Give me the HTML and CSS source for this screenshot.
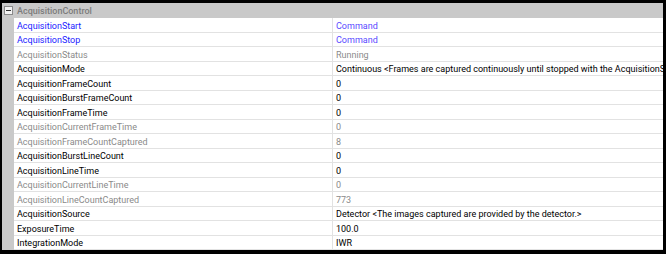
FILE: index.html
```html
<!DOCTYPE html>
<html lang="en">
<head>
  <meta charset="UTF-8" />
  <title>AcquisitionControl</title>
  <link rel="stylesheet" href="styles.css">
</head>
<body>
  <div class="frame">
    <div class="grid">
      <div class="cat">
        <span class="toggle"><span class="minus"></span></span>
        <span class="cat-name">AcquisitionControl</span>
      </div>
      <div class="body">
        <div class="strip"></div>
        <div class="rows">
          <div class="row cmd"><div class="name">AcquisitionStart</div><div class="value">Command</div></div>
          <div class="row cmd"><div class="name">AcquisitionStop</div><div class="value">Command</div></div>
          <div class="row ro"><div class="name">AcquisitionStatus</div><div class="value">Running</div></div>
          <div class="row"><div class="name">AcquisitionMode</div><div class="value">Continuous &lt;Frames are captured continuously until stopped with the AcquisitionStop command.&gt;</div></div>
          <div class="row"><div class="name">AcquisitionFrameCount</div><div class="value">0</div></div>
          <div class="row"><div class="name">AcquisitionBurstFrameCount</div><div class="value">0</div></div>
          <div class="row"><div class="name">AcquisitionFrameTime</div><div class="value">0</div></div>
          <div class="row ro"><div class="name">AcquisitionCurrentFrameTime</div><div class="value">0</div></div>
          <div class="row ro"><div class="name">AcquisitionFrameCountCaptured</div><div class="value">8</div></div>
          <div class="row"><div class="name">AcquisitionBurstLineCount</div><div class="value">0</div></div>
          <div class="row"><div class="name">AcquisitionLineTime</div><div class="value">0</div></div>
          <div class="row ro"><div class="name">AcquisitionCurrentLineTime</div><div class="value">0</div></div>
          <div class="row ro"><div class="name">AcquisitionLineCountCaptured</div><div class="value">773</div></div>
          <div class="row"><div class="name">AcquisitionSource</div><div class="value">Detector &lt;The images captured are provided by the detector.&gt;</div></div>
          <div class="row"><div class="name">ExposureTime</div><div class="value">100.0</div></div>
          <div class="row"><div class="name">IntegrationMode</div><div class="value">IWR</div></div>
        </div>
      </div>
    </div>
  </div>
</body>
</html>
```

FILE: styles.css
```css
html, body {
  margin: 0;
  background: #000;
}

body {
  font-family: Roboto, 'Noto Sans CJK KR', sans-serif;
  font-size: 9px;
  color: #000;
}

.frame {
  width: 666px;
  height: 254px;
  box-sizing: border-box;
  padding: 3px 3px 4px 2px;
}

.grid {
  height: 100%;
  background: #fff;
  display: flex;
  flex-direction: column;
  overflow: hidden;
}

.cat {
  height: 15px;
  flex: none;
  background: #c9c9c9;
  display: flex;
  align-items: center;
  color: #7c7c7c;
  font-weight: 500;
  line-height: 13px;
}

.toggle {
  width: 12px;
  flex: none;
  display: flex;
  justify-content: center;
}

.minus {
  width: 7px;
  height: 7px;
  border: 1px solid #8a8a8a;
  background: #f4f4f4;
  position: relative;
}

.minus::after {
  content: '';
  position: absolute;
  left: 1px;
  right: 1px;
  top: 3px;
  height: 1px;
  background: #333;
}

.cat-name {
  padding-left: 3px;
  padding-top: 1px;
}

.body {
  flex: 1;
  display: flex;
}

.strip {
  width: 12px;
  flex: none;
  background: #c9c9c9;
}

.rows {
  flex: 1;
  display: flex;
  flex-direction: column;
}

.row {
  height: 14.5px;
  box-sizing: border-box;
  display: grid;
  grid-template-columns: 319px 1fr;
  border-bottom: 1px solid #e2e2e2;
  line-height: 12px;
  white-space: nowrap;
}

.name,
.value {
  padding: 1.5px 0 0 3px;
  overflow: hidden;
}

.name {
  border-right: 1px solid #e2e2e2;
}

.cmd .name {
  color: #2222ff;
}

.cmd .value {
  color: #5a4aff;
}

.ro .name,
.ro .value {
  color: #8a8a8a;
}
```
